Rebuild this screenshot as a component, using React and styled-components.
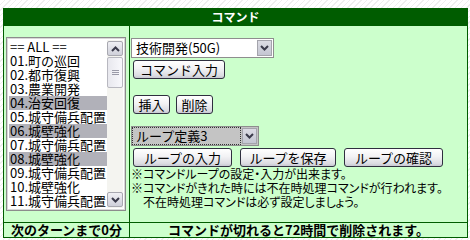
import styled, { createGlobalStyle } from "styled-components";

const GlobalStyle = createGlobalStyle`
  body {
    margin: 0;
    background-color: #ffffff;
    background-image: repeating-linear-gradient(
      135deg,
      #ffffff 0px,
      #ffffff 3px,
      #eeeeee 3px,
      #eeeeee 4px
    );
    font-family: "Noto Sans CJK JP", "Liberation Sans", sans-serif;
  }
`;

const Page = styled.div`
  padding: 8px 2px 0 3px;
`;

const Table = styled.div`
  display: grid;
  grid-template-columns: 125px 337px;
  grid-template-rows: 16px 196px 14px;
  gap: 1px;
  width: 463px;
  border: 1px solid #005c00;
  background: #005c00;
`;

const Header = styled.div`
  grid-column: span 2;
  background: #005c00;
  color: #ffffff;
  font-size: 12px;
  font-weight: bold;
  line-height: 16px;
  text-align: center;
`;

const Cell = styled.div`
  background: #ccffcc;
  display: flex;
  flex-direction: ${({ $column }) => ($column ? "column" : "row")};
  align-items: ${({ $column }) => ($column ? "flex-start" : "center")};
  justify-content: center;
  padding: ${({ $pad }) => $pad || "0"};
  box-sizing: border-box;
`;

const FootCell = styled.div`
  background: #ccffcc;
  color: #000000;
  font-size: 13px;
  font-weight: bold;
  line-height: 14px;
  text-align: center;
  white-space: nowrap;
`;

const ListBox = styled.div`
  display: flex;
  width: 120px;
  height: 174px;
  box-sizing: border-box;
  border: 1px solid #8c8c8c;
  box-shadow: inset 0 0 0 1px #d8d8d8;
  background: #ffffff;
  padding: 2px;
`;

const Items = styled.div`
  flex: 1;
`;

const Item = styled.div`
  height: 14px;
  line-height: 14px;
  font-size: 13px;
  padding-left: 1px;
  white-space: nowrap;
  color: #000000;
  background: ${({ $selected }) => ($selected ? "#b1b1b9" : "transparent")};
`;

const ScrollBar = styled.div`
  width: 16px;
  display: flex;
  flex-direction: column;
  background: #f4f4f0;
`;

const ScrollButton = styled.div`
  height: 15px;
  margin: 1px 0;
  box-sizing: border-box;
  border: 1px solid #a8a8b0;
  border-radius: 2px;
  background: linear-gradient(#f0f0f4, #cfd0da);
  display: flex;
  align-items: center;
  justify-content: center;
`;

const Thumb = styled.div`
  height: 31px;
  box-sizing: border-box;
  border: 1px solid #b8b8c0;
  border-radius: 2px;
  background: linear-gradient(90deg, #e8e8ee, #f8f8fc);
  display: flex;
  align-items: center;
  justify-content: center;
`;

const Track = styled.div`
  flex: 1;
`;

const Select = styled.div`
  display: flex;
  width: ${({ $width }) => $width};
  height: 20px;
  box-sizing: border-box;
  border: 1px solid #8e8e8e;
  background: ${({ $grey }) => ($grey ? "#c4c4c4" : "#ffffff")};
  margin-bottom: ${({ $mb }) => $mb || "0"};
`;

const SelectText = styled.div`
  flex: 1;
  font-size: 13px;
  line-height: 16px;
  padding: 0 3px;
  margin: 1px;
  color: #000000;
  white-space: nowrap;
  outline: ${({ $focus }) => ($focus ? "1px dotted #333333" : "none")};
`;

const DropButton = styled.div`
  width: 15px;
  margin: 1px;
  box-sizing: border-box;
  border: 1px solid #a4a4ac;
  background: linear-gradient(#dcdce4, #c4c6d2);
  display: flex;
  align-items: center;
  justify-content: center;
`;

const ButtonRow = styled.div`
  display: flex;
  gap: ${({ $gap }) => $gap || "6px"};
  margin-left: 2px;
  margin-bottom: ${({ $mb }) => $mb || "0"};
`;

const Button = styled.div`
  width: ${({ $width }) => $width};
  height: 19px;
  box-sizing: border-box;
  border: 1px solid #2f2f3f;
  border-radius: 3px;
  background: linear-gradient(#ffffff 0%, #f2f2f4 45%, #dcdce2 85%, #c8c8d2 100%);
  font-size: 13px;
  line-height: 17px;
  text-align: center;
  color: #000000;
  white-space: nowrap;
`;

const Note = styled.div`
  font-size: 12px;
  line-height: 14px;
  color: #000000;
  white-space: nowrap;
  font-feature-settings: "palt";
`;

const Chevron = ({ up }) => (
  <svg width="9" height="6" viewBox="0 0 9 6">
    <path
      d={up ? "M1 5 L4.5 1.5 L8 5" : "M1 1 L4.5 4.5 L8 1"}
      fill="none"
      stroke="#3a3a4a"
      strokeWidth="2"
    />
  </svg>
);

const Grip = () => (
  <svg width="7" height="7" viewBox="0 0 7 7">
    <path d="M0 1.5H7M0 3.5H7M0 5.5H7" stroke="#9a9aa8" strokeWidth="1" />
  </svg>
);

const items = [
  "== ALL ==",
  "01.町の巡回",
  "02.都市復興",
  "03.農業開発",
  "04.治安回復",
  "05.城守備兵配置",
  "06.城壁強化",
  "07.城守備兵配置",
  "08.城壁強化",
  "09.城守備兵配置",
  "10.城壁強化",
  "11.城守備兵配置",
];

const selected = [4, 6, 8];

export default function App() {
  return (
    <Page>
      <GlobalStyle />
      <Table>
        <Header>コマンド</Header>
        <Cell $pad="0 3px 0 2px">
          <ListBox>
            <Items>
              {items.map((item, index) => (
                <Item key={index} $selected={selected.includes(index)}>
                  {item}
                </Item>
              ))}
            </Items>
            <ScrollBar>
              <ScrollButton>
                <Chevron up />
              </ScrollButton>
              <Thumb>
                <Grip />
              </Thumb>
              <Track />
              <ScrollButton>
                <Chevron />
              </ScrollButton>
            </ScrollBar>
          </ListBox>
        </Cell>
        <Cell $column $pad="0 0 2px 1px">
          <Select $width="143px" $mb="2px">
            <SelectText>技術開発(50G)</SelectText>
            <DropButton>
              <Chevron />
            </DropButton>
          </Select>
          <ButtonRow $mb="16px">
            <Button $width="92px">コマンド入力</Button>
          </ButtonRow>
          <ButtonRow $mb="12px">
            <Button $width="37px">挿入</Button>
            <Button $width="37px">削除</Button>
          </ButtonRow>
          <Select $width="128px" $grey $mb="2px">
            <SelectText $focus>ループ定義3</SelectText>
            <DropButton>
              <Chevron />
            </DropButton>
          </Select>
          <ButtonRow $gap="8px">
            <Button $width="99px">ループの入力</Button>
            <Button $width="96px">ループを保存</Button>
            <Button $width="99px">ループの確認</Button>
          </ButtonRow>
          <Note>※コマンドループの設定・入力が出来ます。</Note>
          <Note>※コマンドがきれた時には不在時処理コマンドが行われます。</Note>
          <Note>　不在時処理コマンドは必ず設定しましょう。</Note>
        </Cell>
        <FootCell>次のターンまで0分</FootCell>
        <FootCell>コマンドが切れると72時間で削除されます。</FootCell>
      </Table>
    </Page>
  );
}
